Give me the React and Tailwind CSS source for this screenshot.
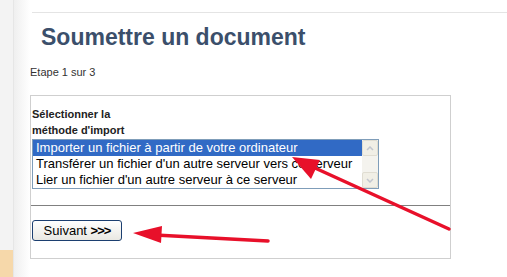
const options = [
  "Importer un fichier à partir de votre ordinateur",
  "Transférer un fichier d'un autre serveur vers ce serveur",
  "Lier un fichier d'un autre serveur à ce serveur",
];

const App = () => {
  return (
    <div className="relative flex h-[277px] w-[507px] overflow-hidden bg-white font-['Liberation_Sans',Arial,sans-serif] text-[#222]">
      {/* left rail */}
      <div className="flex h-full w-[30px] shrink-0">
        <div className="flex h-full w-[14px] flex-col justify-end border-r border-[#e6e6e6] bg-[#f3f3f3]">
          <div className="h-[27px] bg-[#f6d8aa]"></div>
        </div>
        <div className="h-full flex-1 bg-gradient-to-r from-[#efefef] to-white"></div>
      </div>

      <div className="flex-1 pt-[12px]">
        <div className="ml-[2px] border-t border-[#e4e4e4]"></div>
        <h1 className="mt-[11px] pl-[11px] text-[23px] leading-[26px] font-bold text-[#3b4f6b]">
          Soumettre un document
        </h1>
        <div className="mt-[16px] text-[11px] leading-[13px] text-[#333]">Etape 1 sur 3</div>

        <div className="mt-[16px] w-[421px] border border-[#cfcfcf]">
          <div className="px-[1px] pt-[10px] text-[11px] leading-[16px] font-bold text-[#222]">
            Sélectionner la
            <br />
            méthode d'import
          </div>
          <div className="ml-[1px] mt-[1px] flex h-[50px] w-[347px] border border-[#7f9db9] bg-white">
            <div className="flex-1 text-[13px] leading-[16px]">
              {options.map((o, i) => (
                <div
                  key={o}
                  className={
                    i === 0
                      ? "h-[16px] bg-[#316ac5] pl-[3px] text-white"
                      : "h-[16px] pl-[3px] text-black"
                  }
                >
                  {o}
                </div>
              ))}
            </div>
            <div className="flex w-[16px] flex-col justify-between bg-[#f4f3ee]">
              <div className="flex h-[16px] items-center justify-center rounded-[2px] border border-[#e0ddd2] bg-[#f1efe6]">
                <svg width="8" height="5" viewBox="0 0 8 5">
                  <path d="M1 4 L4 1 L7 4" fill="none" stroke="#c2c6cf" strokeWidth="1.5" />
                </svg>
              </div>
              <div className="flex h-[16px] items-center justify-center rounded-[2px] border border-[#e0ddd2] bg-[#f1efe6]">
                <svg width="8" height="5" viewBox="0 0 8 5">
                  <path d="M1 1 L4 4 L7 1" fill="none" stroke="#c2c6cf" strokeWidth="1.5" />
                </svg>
              </div>
            </div>
          </div>
          <div className="mt-[16px] border-t border-[#808080]"></div>
          <div className="px-[1px] pt-[12px] pb-[16px]">
            <button className="h-[21px] w-[90px] rounded-[3px] border border-[#1c3f70] bg-gradient-to-b from-white to-[#e9e8e2] text-[13px] leading-[19px] text-black">
              Suivant <span className="font-bold tracking-[-1px]">&gt;&gt;&gt;</span>
            </button>
          </div>
        </div>
      </div>

      {/* annotation arrows */}
      <svg className="pointer-events-none absolute left-0 top-0" width="507" height="277" viewBox="0 0 507 277">
        <line x1="449" y1="229" x2="315" y2="168" stroke="#e8102a" strokeWidth="3.5" strokeLinecap="round" />
        <polygon points="292,157 320,160 311,179" fill="#e8102a" />
        <line x1="268" y1="241" x2="155" y2="235" stroke="#e8102a" strokeWidth="3.5" strokeLinecap="round" />
        <polygon points="133,233 162,226 161,243" fill="#e8102a" />
      </svg>
    </div>
  );
};

export default App;
